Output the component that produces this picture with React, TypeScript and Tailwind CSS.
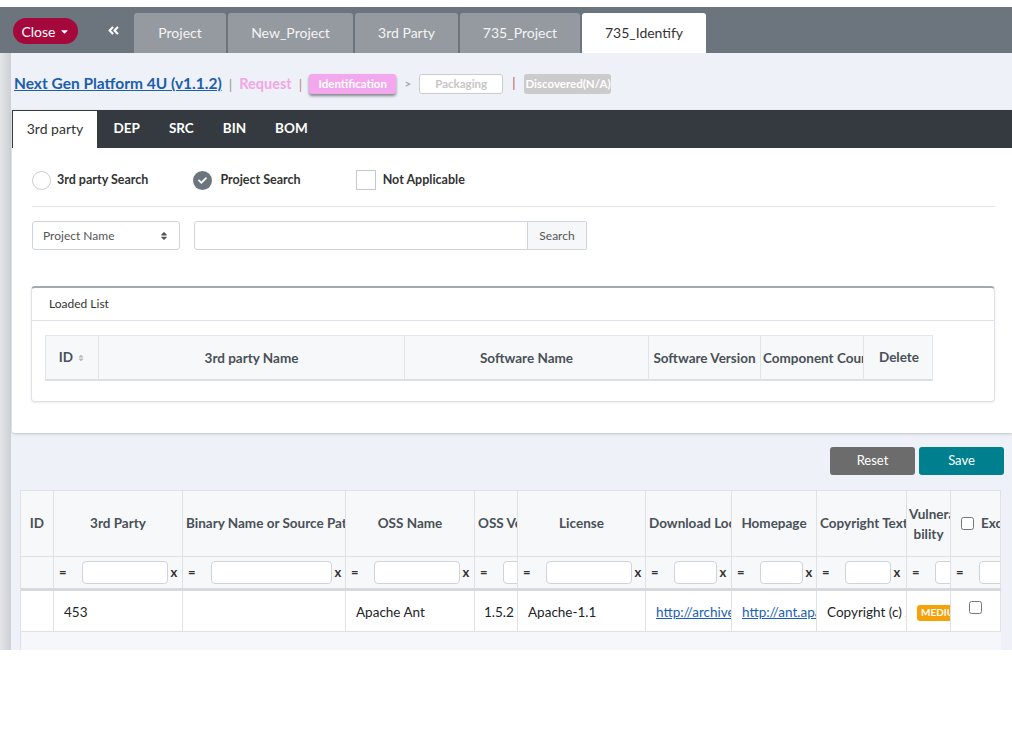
import { FaAngleDoubleLeft, FaSort, FaCaretDown, FaCheck } from "react-icons/fa";

const topTabs = [
  { label: "Project", w: "w-[92px]" },
  { label: "New_Project", w: "w-[125px]" },
  { label: "3rd Party", w: "w-[103px]" },
  { label: "735_Project", w: "w-[120px]" },
  { label: "735_Identify", w: "w-[124px]", active: true },
];

const loadedCols = [
  { label: "ID", w: 53 },
  { label: "3rd party Name", w: 306 },
  { label: "Software Name", w: 244 },
  { label: "Software Version", w: 112 },
  { label: "Component Count", w: 103 },
  { label: "Delete", w: 70 },
];

const cols = [
  { label: "ID", w: 33, input: 0 },
  { label: "3rd Party", w: 129, input: 86 },
  { label: "Binary Name or Source Path", w: 163, input: 121 },
  { label: "OSS Name", w: 129, input: 86 },
  { label: "OSS Version", w: 43, input: 40 },
  { label: "License", w: 128, input: 86 },
  { label: "Download Location", w: 86, input: 43 },
  { label: "Homepage", w: 85, input: 43 },
  { label: "Copyright Text", w: 90, input: 46 },
  { label: "Vulnerability", w: 44, input: 40 },
  { label: "Exclude", w: 50, input: 40 },
];

function FilterCell({ input }: { input: number }) {
  if (!input) return <div />;
  return (
    <div className="flex items-center h-full pl-[5px] pr-[7px] overflow-hidden">
      <span className="font-bold text-[13px] text-[#333] shrink-0">=</span>
      <input
        className="ml-[15px] shrink-0 h-[23px] rounded-[4px] border border-[#ced4da] bg-white"
        style={{ width: input }}
      />
      <span className="ml-[3px] font-bold text-[13px] text-[#333] shrink-0">x</span>
    </div>
  );
}

export default function App() {
  return (
    <div className="w-[1012px] h-[743px] bg-white overflow-hidden font-['Lato','Noto_Sans',sans-serif] text-[#212529]">
      <div className="h-[7px] bg-white" />

      {/* top bar */}
      <div className="h-[46px] bg-[#6c757d] flex">
        <button className="ml-[13px] self-center mt-[2px] h-[26px] w-[65px] rounded-full bg-[#a5093b] text-white text-[14px] flex items-center justify-center gap-[3px]">
          Close <FaCaretDown size={11} />
        </button>
        <div className="ml-[29px] self-center text-white">
          <FaAngleDoubleLeft size={13} />
        </div>
        <div className="ml-[14px] flex gap-[2px] self-end">
          {topTabs.map((t) => (
            <div
              key={t.label}
              className={
                t.active
                  ? `${t.w} h-[40px] pb-[1px] rounded-t-[3px] bg-white text-[#333] text-[14px] flex items-center justify-center`
                  : `${t.w} h-[40px] pb-[1px] rounded-t-[3px] bg-[#959aa0] text-[#f4f4f4] text-[14px] flex items-center justify-center`
              }
            >
              {t.label}
            </div>
          ))}
        </div>
      </div>

      <div className="flex h-[597px]">
        <div className="w-[11px] bg-gradient-to-r from-[#e3e5e8] to-[#cdd0d4]" />
        <div className="flex-1 bg-[#eef1f8] flex flex-col">
          {/* breadcrumb */}
          <div className="h-[57px] flex items-center pl-[3px] pt-[5px]">
            <a className="text-[15.5px] font-bold text-[#1b5eab] underline">Next Gen Platform 4U (v1.1.2)</a>
            <span className="mx-[7px] text-[#999] text-[14px]">|</span>
            <span className="text-[14.5px] font-bold text-[#f3a6e6]">Request</span>
            <span className="mx-[7px] text-[#b88] text-[14px]">|</span>
            <span className="w-[87px] h-[20px] rounded-[3px] bg-[#f3a8ee] text-white text-[11.5px] font-bold flex items-center justify-center shadow-[0_2px_3px_rgba(0,0,0,0.45)]">
              Identification
            </span>
            <span className="mx-[8px] text-[#aaa] text-[12px] font-bold">&gt;</span>
            <span className="w-[84px] h-[20px] rounded-[3px] bg-white border border-[#ccc] text-[#c6c6c6] text-[11.5px] font-bold flex items-center justify-center">
              Packaging
            </span>
            <span className="mx-[9px] text-[#b0506a] text-[13px]">|</span>
            <span className="w-[87px] h-[20px] rounded-[3px] bg-[#cbcbcb] text-white text-[11.5px] font-bold flex items-center justify-center">
              Discovered(N/A)
            </span>
          </div>

          {/* panel */}
          <div className="ml-[1px] bg-white h-[323px] shadow-[0_1px_3px_rgba(0,0,0,0.2)] rounded-bl-[3px]">
            <div className="h-[38px] bg-[#343a40] flex items-end pl-[1px]">
              <div className="h-[37px] w-[84px] pb-[3px] mr-[2px] bg-white text-[14px] text-[#333] flex items-center justify-center">3rd party</div>
              {["DEP", "SRC", "BIN", "BOM"].map((t) => (
                <div key={t} className="h-[37px] pb-[3px] px-[14.5px] text-[13.5px] font-bold text-white flex items-center">
                  {t}
                </div>
              ))}
            </div>

            <div className="pl-[20px] pr-[17px] pt-[22px]">
              <div className="flex items-center h-[20px] text-[12.5px] font-bold text-[#333]">
                <span className="w-[19px] h-[19px] rounded-full border border-[#ccc] bg-white" />
                <span className="ml-[6px]">3rd party Search</span>
                <span className="ml-[45px] w-[19px] h-[19px] rounded-full bg-[#6c757d] flex items-center justify-center text-white">
                  <FaCheck size={9} />
                </span>
                <span className="ml-[8px]">Project Search</span>
                <span className="ml-[55px] w-[20px] h-[20px] border border-[#c8c8c8] bg-white" />
                <span className="ml-[7px]">Not Applicable</span>
              </div>

              <div className="mt-[16px] border-t border-[#e3e5e8]" />

              <div className="mt-[14px] flex h-[29px]">
                <div className="w-[148px] h-full rounded-[3px] border border-[#ced4da] flex items-center justify-between pl-[10px] pr-[10px] text-[12px] text-[#555]">
                  Project Name
                  <FaSort size={10} className="text-[#555]" />
                </div>
                <div className="ml-[14px] w-[334px] h-full rounded-l-[3px] border border-[#ced4da]" />
                <div className="w-[59px] h-full border border-l-0 border-[#ced4da] bg-[#f6f7f9] rounded-r-[2px] text-[12px] text-[#555] flex items-center justify-center">
                  Search
                </div>
              </div>

              {/* loaded list card */}
              <div className="mt-[36px] -ml-[1px] h-[116px] rounded-[4px] border border-[#dee2e6] border-t-2 border-t-[#a3a8ad] shadow-[0_1px_2px_rgba(0,0,0,0.08)]">
                <div className="h-[33px] flex items-center pl-[17px] text-[12px] text-[#333] border-b border-[#dee2e6]">
                  Loaded List
                </div>
                <div className="pt-[14px] pl-[13px]">
                  <div className="flex h-[46px] bg-[#f7f8fa] border border-[#e3e6ea] border-b-2 border-b-[#dcdfe3] w-[888px]">
                    {loadedCols.map((c, i) => (
                      <div
                        key={c.label}
                        className={
                          i === 0
                            ? "h-full flex items-center justify-center gap-[4px] border-r border-[#e1e4e8] text-[13.5px] font-bold text-[#495057] shrink-0"
                            : i === loadedCols.length - 1
                              ? "h-full flex items-center justify-center text-[13.5px] font-bold text-[#495057] shrink-0"
                              : "h-full leading-[44px] text-center whitespace-nowrap overflow-hidden border-r border-[#e1e4e8] text-[13.5px] font-bold text-[#495057] shrink-0 px-[2px]"
                        }
                        style={{ width: c.w }}
                      >
                        {c.label}
                        {i === 0 && <FaSort size={8} className="text-[#b5b9bd]" />}
                      </div>
                    ))}
                  </div>
                </div>
              </div>
            </div>
          </div>

          {/* buttons */}
          <div className="mt-[14px] flex justify-end gap-[4px] pr-[8px]">
            <button className="w-[85px] h-[28px] rounded-[3px] bg-[#6c6c6c] text-white text-[13px]">Reset</button>
            <button className="w-[85px] h-[28px] rounded-[3px] bg-[#00808f] text-white text-[13px]">Save</button>
          </div>

          {/* bottom table */}
          <div className="mt-[15px] ml-[9px] w-[981px] flex-1 bg-[#f6f7fa] border-l border-[#dee2e6] overflow-hidden">
            <div className="flex h-[67px] border-t border-b border-[#dee2e6] bg-[#f7f8fa]">
              {cols.map((c, i) => (
                <div
                  key={c.label}
                  className="shrink-0 h-full border-r border-[#dee2e6] overflow-hidden flex items-center"
                  style={{ width: c.w }}
                >
                  {i === 9 ? (
                    <div className="w-full text-[13.5px] font-bold text-[#495057] leading-[20px] whitespace-nowrap">
                      <div className="pl-[2px]">Vulnera</div>
                      <div className="text-center">bility</div>
                    </div>
                  ) : i === 10 ? (
                    <div className="flex items-center pl-[10px] gap-[7px] text-[13.5px] font-bold text-[#495057] whitespace-nowrap">
                      <input type="checkbox" className="w-[13px] h-[13px] shrink-0" />
                      Exclude
                    </div>
                  ) : (
                    <div className="w-full text-center whitespace-nowrap text-[13.5px] font-bold text-[#495057] px-[3px]">
                      {c.label}
                    </div>
                  )}
                </div>
              ))}
            </div>
            <div className="flex h-[34px] border-b-[3px] border-[#d6d9dd] bg-[#f7f8fa]">
              {cols.map((c) => (
                <div key={c.label} className="shrink-0 h-full border-r border-[#dee2e6] overflow-hidden" style={{ width: c.w }}>
                  <FilterCell input={c.input} />
                </div>
              ))}
            </div>
            <div className="flex h-[41px] border-b border-[#dee2e6] bg-white text-[13.5px] text-[#212529]">
              {[
                <span />,
                <span>453</span>,
                <span />,
                <span>Apache Ant</span>,
                <span>1.5.2</span>,
                <span>Apache-1.1</span>,
                <a className="text-[#1a5fb4] underline">http://archive.apache.org/dist/ant/</a>,
                <a className="text-[#1a5fb4] underline">http://ant.apache.org</a>,
                <span>Copyright (c) 2000-2002 The Apache Software Foundation</span>,
                <span className="px-[4px] h-[16px] rounded-[3px] bg-[#f5a20a] text-white text-[10px] font-bold flex items-center">MEDIUM</span>,
                <input type="checkbox" className="w-[13px] h-[13px] mx-auto -mt-[10px]" />,
              ].map((el, i) => (
                <div
                  key={i}
                  className={
                    i === 10
                      ? "shrink-0 h-full pt-[3px] flex items-center border-r border-[#dee2e6] overflow-hidden"
                      : i === 4
                        ? "shrink-0 h-full pt-[3px] flex items-center pl-[9px] whitespace-nowrap border-r border-[#dee2e6] overflow-hidden"
                        : "shrink-0 h-full pt-[3px] flex items-center pl-[10px] whitespace-nowrap border-r border-[#dee2e6] overflow-hidden"
                  }
                  style={{ width: cols[i].w }}
                >
                  {el}
                </div>
              ))}
            </div>
          </div>
        </div>
      </div>
    </div>
  );
}
